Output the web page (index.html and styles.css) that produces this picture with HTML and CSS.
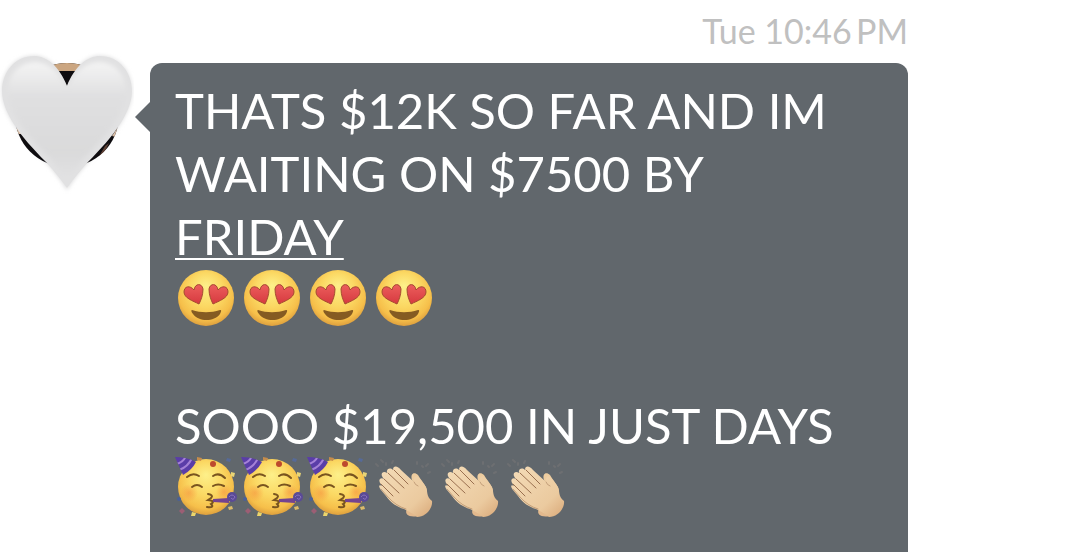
FILE: index.html
```html
<!DOCTYPE html>
<html lang="en">
<head>
  <meta charset="utf-8">
  <meta name="viewport" content="width=device-width, initial-scale=1">
  <title>Messages</title>
  <link rel="stylesheet" href="styles.css">
</head>
<body>
  <!-- emoji shapes, reused below -->
  <svg class="defs" width="0" height="0" aria-hidden="true">
    <defs>
      <radialGradient id="face" cx="50%" cy="42%" r="60%" fx="50%" fy="28%">
        <stop offset="0" stop-color="#fdf08a"/>
        <stop offset="0.5" stop-color="#fbd863"/>
        <stop offset="0.82" stop-color="#f6bf4a"/>
        <stop offset="1" stop-color="#d99a3c"/>
      </radialGradient>
      <linearGradient id="love" x1="0" y1="0" x2="0" y2="1">
        <stop offset="0" stop-color="#ec5e5c"/>
        <stop offset="1" stop-color="#d6393f"/>
      </linearGradient>
      <radialGradient id="blush">
        <stop offset="0" stop-color="#f58a3c" stop-opacity="0.5"/>
        <stop offset="1" stop-color="#f58a3c" stop-opacity="0"/>
      </radialGradient>
      <linearGradient id="skin" x1="0" y1="0" x2="1" y2="1">
        <stop offset="0" stop-color="#f4dcb8"/>
        <stop offset="0.7" stop-color="#ebca9f"/>
        <stop offset="1" stop-color="#d9a878"/>
      </linearGradient>
      <clipPath id="hat-clip"><path d="M0 -1Q12 -1 21 4Q17 12 8 17Z"/></clipPath>

      <symbol id="heart-eyes" viewBox="0 -1 66 63">
        <circle cx="31" cy="29" r="28" fill="url(#face)"/>
        <g fill="url(#love)" stroke="#a54a30" stroke-width="1">
          <path d="M24 35C18 32 9 29 9 23C9 17 15 16 19 21C20 14 27 14 28 20C28 26 26 31 24 35Z"/>
          <path d="M38 35C44 32 53 29 53 23C53 17 47 16 43 21C42 14 35 14 34 20C34 26 36 31 38 35Z"/>
        </g>
        <path d="M17 41C26 44 36 44 45 41C47 41 46 43 45 45C39 53 24 53 18 45C16 43 16 41 17 41Z" fill="#855b22"/>
      </symbol>

      <symbol id="party" viewBox="0 -1 66 63">
        <circle cx="31" cy="29" r="28" fill="url(#face)"/>
        <circle cx="14" cy="35" r="9" fill="url(#blush)"/>
        <circle cx="49" cy="34" r="8" fill="url(#blush)"/>
        <path d="M0 -1Q12 -1 21 4Q17 12 8 17Z" fill="#5a3da8"/>
        <g clip-path="url(#hat-clip)" fill="none" stroke="#a481d6" stroke-width="2">
          <path d="M1 6Q8 5 11 -2M4 12Q13 9 17 0"/>
        </g>
        <g fill="none" stroke="#79541f" stroke-width="2" stroke-linecap="round">
          <path d="M12 19Q18 14 24 18M38 18Q44 14 50 20"/>
          <path d="M17 29Q22 25 27 29M38 28Q43 25 49 28"/>
          <path d="M33 36Q39 37 36 40L33 42Q41 43 36 46Q40 50 32 49"/>
        </g>
        <path d="M38 41L54 40V45L38 44Z" fill="#74438f"/>
        <circle cx="57" cy="39" r="5" fill="#5a4a96"/>
        <path d="M54 39Q57 35 60 39Q58 43 56 40" fill="none" stroke="#8870bb" stroke-width="1"/>
        <circle cx="38" cy="6" r="3" fill="#bd4a2d"/>
        <path d="M22 -1L27 0L26 3L22 2Z" fill="#c68c4b"/>
        <path d="M52 0L56 1L55 4L51 3Z" fill="#566a98"/>
        <path d="M56 14L60 15L59 19L56 18Z" fill="#e8d476"/>
        <circle cx="4" cy="41" r="2" fill="#4b6097"/>
        <path d="M4 53L7 50L10 53L7 56Z" fill="#9c5e74"/>
        <path d="M17 54L21 55L20 58L16 58Z" fill="#ecd56b"/>
        <path d="M53 49L57 48L58 51L54 52Z" fill="#dcbb69"/>
      </symbol>

      <symbol id="clap" viewBox="0 -1 66 63">
        <path d="M34 51C31 56 36 60 45 58L49 52Z" fill="#e3b98d"/>
        <path d="M39 22C37 16 41 13 45 17C48 23 53 26 54 33L47 42Z" fill="#edcc9f"/>
        <path d="M7 25C5 21 8 19 11 21C6 16 10 12 14 15C13 11 17 9 20 12C20 7 25 8 28 12L41 24C40 18 44 16 47 21L53 29C55 34 53 38 59 43C60 50 53 59 44 59C40 55 36 54 31 51C24 49 18 45 13 38L8 32C5 28 6 26 9 28Z" fill="url(#skin)"/>
        <g fill="none" stroke="#9a7050" stroke-width="1" stroke-linecap="round">
          <path d="M8 26L20 38M11 21L26 35M15 15L31 30M21 12L35 26"/>
          <path d="M8 31L15 39Q23 48 33 51" opacity="0.5"/>
          <path d="M41 24Q42 27 45 28" opacity="0.5"/>
        </g>
        <g fill="none" stroke="#7a7878" stroke-width="2" stroke-linecap="round" opacity="0.5">
          <path d="M3 6L5 8M8 2L10 4M13 5V7M20 3L19 5M44 4V6M49 8L50 9M55 6L53 8M57 14L55 15"/>
        </g>
      </symbol>
    </defs>
  </svg>

  <main class="thread">
    <time class="timestamp">Tue 10:46&#8201;PM</time>

    <article class="message">
      <svg class="avatar" viewBox="0 52 134 142" role="img" aria-label="White heart">
        <defs>
          <linearGradient id="heart-fill" x1="0" y1="0" x2="0" y2="1">
            <stop offset="0" stop-color="#f4f4f4"/>
            <stop offset="0.28" stop-color="#e0e0e1"/>
            <stop offset="0.75" stop-color="#dadadb"/>
            <stop offset="1" stop-color="#e2e2e3"/>
          </linearGradient>
          <filter id="soft" x="-10%" y="-10%" width="120%" height="120%">
            <feGaussianBlur stdDeviation="2"/>
          </filter>
          <clipPath id="photo"><circle cx="67" cy="115" r="52"/></clipPath>
          <clipPath id="heart-clip"><path d="M67 86C59 66 47 56 34 56C15 56 2 72 2 91C2 112 20 136 46 162Q60 178 67 188Q74 178 88 162C114 136 132 112 132 91C132 72 119 56 100 56C87 56 75 66 67 86Z"/></clipPath>
        </defs>
        <path d="M67 86C59 66 47 56 34 56C15 56 2 72 2 91C2 112 20 136 46 162Q60 178 67 190Q74 178 88 162C114 136 132 112 132 91C132 72 119 56 100 56C87 56 75 66 67 86Z" fill="#dcdcdd" filter="url(#soft)"/>
        <g clip-path="url(#photo)">
          <rect x="15" y="63" width="104" height="104" fill="#0e0c0f"/>
          <rect x="45" y="63" width="44" height="8" fill="#cba681"/>
          <path d="M98 158L105 146L109 143L103 155Z" fill="#5d4035"/>
          <path d="M14 128H22V134H14ZM112 136L120 124V138Z" fill="#d9bda5"/>
        </g>
        <path d="M67 86C59 66 47 56 34 56C15 56 2 72 2 91C2 112 20 136 46 162Q60 178 67 188Q74 178 88 162C114 136 132 112 132 91C132 72 119 56 100 56C87 56 75 66 67 86Z" fill="#e1e1e2"/>
        <g clip-path="url(#heart-clip)">
          <path d="M67 88C58 70 47 62 35 62C18 62 8 76 8 91C8 112 26 134 50 158Q60 171 67 181Q74 171 84 158C108 134 126 112 126 91C126 76 116 62 99 62C87 62 76 70 67 88Z" fill="url(#heart-fill)" filter="url(#soft)"/>
        </g>
      </svg>

      <div class="bubble">
        <p>THATS $12K SO FAR AND IM<br>WAITING ON $7500 BY<br><a href="#">FRIDAY</a></p>
        <div class="emoji-row" role="img" aria-label="Four smiling faces with heart eyes">
          <svg><use href="#heart-eyes"/></svg>
          <svg><use href="#heart-eyes"/></svg>
          <svg><use href="#heart-eyes"/></svg>
          <svg><use href="#heart-eyes"/></svg>
        </div>
        <p class="next">SOOO $19,500 IN JUST DAYS</p>
        <div class="emoji-row" role="img" aria-label="Three partying faces, three clapping hands">
          <svg><use href="#party"/></svg>
          <svg><use href="#party"/></svg>
          <svg><use href="#party"/></svg>
          <svg><use href="#clap"/></svg>
          <svg><use href="#clap"/></svg>
          <svg><use href="#clap"/></svg>
        </div>
      </div>
    </article>
  </main>
</body>
</html>
```

FILE: styles.css
```css
* {
  box-sizing: border-box;
}
body {
  margin: 0;
  background-color: #fff;
  font-family: Lato, "Open Sans", sans-serif;
}
.defs {
  position: absolute;
}
.thread {
  display: flex;
  flex-direction: column;
  min-height: 100vh;
  padding-right: 167px;
}
.timestamp {
  padding-top: 11px;
  height: 63px;
  font-size: 34px;
  line-height: 40px;
  text-align: right;
  color: #c0c0c0;
}
.message {
  display: flex;
  flex: 1;
  gap: 16px;
}
.avatar {
  flex: none;
  width: 134px;
  height: 142px;
  margin-top: -11px;
}
.bubble {
  position: relative;
  flex: 1;
  padding: 16px 24px 24px 25px;
  border-radius: 12px 12px 0 0;
  background-color: #61676c;
  color: #fff;
  font-size: 49px;
  line-height: 63px;
}
/* pointer towards the avatar */
.bubble::before {
  content: "";
  position: absolute;
  top: 39px;
  left: -15px;
  border: 15px solid transparent;
  border-left-width: 0;
  border-right-color: #61676c;
}
.bubble p {
  margin: 0;
}
.bubble .next {
  margin-top: 63px;
}
.bubble a {
  color: inherit;
  text-decoration-thickness: 2px;
  text-underline-offset: 3px;
  text-decoration-skip-ink: none;
}
.emoji-row {
  display: flex;
}
.emoji-row svg {
  width: 66px;
  height: 63px;
  overflow: visible;
}
.defs symbol {
  overflow: visible;
}
```
